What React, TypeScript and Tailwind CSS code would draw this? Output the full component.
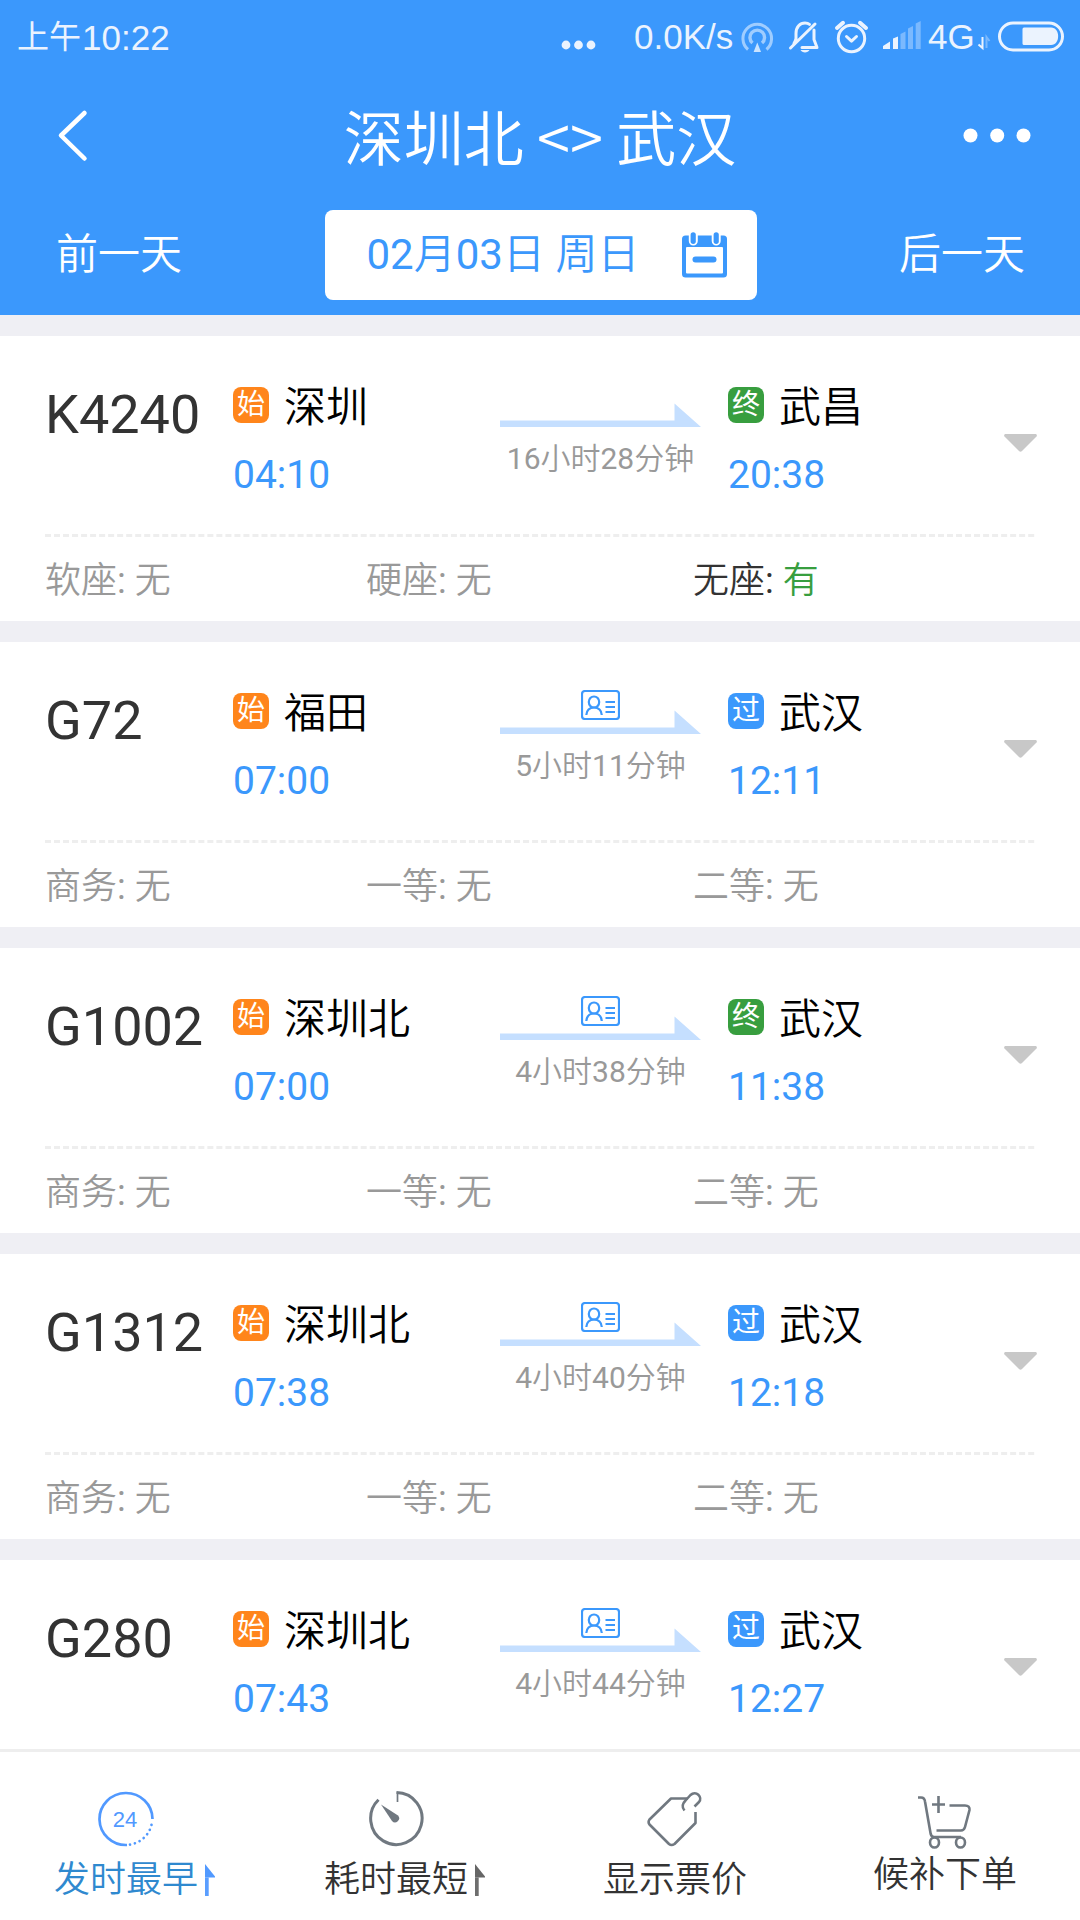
import React from "react";

type StopKind = "始" | "终" | "过";
type Seat = { label: string; value: string; available?: boolean };
type Train = {
  no: string;
  from: string;
  depart: string;
  to: string;
  toKind: StopKind;
  arrive: string;
  duration: string;
  idCard: boolean;
  seats: Seat[];
};

const none = (...labels: string[]): Seat[] => labels.map((label) => ({ label, value: "无" }));

const trains: Train[] = [
  { no: "K4240", from: "深圳", depart: "04:10", to: "武昌", toKind: "终", arrive: "20:38", duration: "16小时28分钟", idCard: false, seats: [...none("软座", "硬座"), { label: "无座", value: "有", available: true }] },
  { no: "G72", from: "福田", depart: "07:00", to: "武汉", toKind: "过", arrive: "12:11", duration: "5小时11分钟", idCard: true, seats: none("商务", "一等", "二等") },
  { no: "G1002", from: "深圳北", depart: "07:00", to: "武汉", toKind: "终", arrive: "11:38", duration: "4小时38分钟", idCard: true, seats: none("商务", "一等", "二等") },
  { no: "G1312", from: "深圳北", depart: "07:38", to: "武汉", toKind: "过", arrive: "12:18", duration: "4小时40分钟", idCard: true, seats: none("商务", "一等", "二等") },
  { no: "G280", from: "深圳北", depart: "07:43", to: "武汉", toKind: "过", arrive: "12:27", duration: "4小时44分钟", idCard: true, seats: [] },
];

/* Renders Chinese runs in the demi-light weight and leaves Latin digits regular. */
function Mixed({ text }: { text: string }) {
  return (
    <>
      {text.split(/([\u4e00-\u9fff]+)/).map((part, i) =>
        i % 2 ? <span key={i} className="font-[350]">{part}</span> : part,
      )}
    </>
  );
}

function StatusBar() {
  return (
    <div className="flex h-[74px] items-center pl-[17px] font-['Liberation_Sans','Noto_Sans_CJK_SC',sans-serif] text-[#ebf3fe]">
      <span className="flex w-[544px] items-center leading-none">
        <span className="text-[32px] leading-none">上午</span>
        <span className="ml-px text-[35px] leading-none">10:22</span>
      </span>
      <svg className="mt-[16px] h-3 w-[36px]" viewBox="0 0 36 12" fill="currentColor">
        <circle cx="5" cy="6" r="4.4" />
        <circle cx="17.5" cy="6" r="4.4" />
        <circle cx="30" cy="6" r="4.4" />
      </svg>
      <span className="-mt-[2px] ml-[37px] w-[107px] text-[35px] leading-none">0.0K/s</span>
      <svg className="h-[56px] w-[190px]" viewBox="741 9 190 56" fill="none" stroke="currentColor">
        <g stroke="#9fcdff" strokeWidth="3">
          <path d="M748 49.5A14.3 14.3 0 1 1 766.500 49.500" />
          <path d="M752.500 43A7.300 7.300 0 1 1 762 43" strokeWidth="3.400" />
          <path d="M757.300 42.500L761 52H753.600Z" fill="#c9e3ff" stroke="none" />
        </g>
        <g strokeWidth="3" strokeLinecap="round" strokeLinejoin="round">
          <path d="M790.500 48L815 24" />
          <path d="M796 39.500V33.500C796 27 800 23 805 23C807 23 808.500 23.500 809.500 24.300" />
          <path d="M796 39.500L794 43.500" />
          <path d="M814 30V39.500L817 47.500H802" />
          <path d="M800.500 50H809.500C808 53.300 802 53.300 800.500 50Z" fill="currentColor" stroke="none" />
          <circle cx="851.500" cy="38.500" r="13.200" />
          <path d="M846.500 36.500L851.500 41.200L856.500 36.500" />
          <path d="M837 28L843 22.800M866 28L860 22.800" strokeWidth="4" />
        </g>
        <g stroke="none" fill="#7bb9fe">
          <path d="M883 49V46L890 41.500V49Z" fill="#ebf3fe" />
          <path d="M893 49V38.500L898 36.500V49Z" fill="#ebf3fe" />
          <path d="M900.500 49V34L905.500 31.500V49Z" />
          <path d="M908 49V28.500L913 26V49Z" />
          <path d="M915.700 49V23.500L920.700 21V49Z" />
        </g>
      </svg>
      <span className="-mt-[2px] -ml-[3px] w-[47px] text-[35px] leading-none">4G</span>
      <svg className="h-[40px] w-[92px]" viewBox="975 17 92 40" fill="none" stroke="currentColor">
        <path d="M982.500 37V48L978.500 44.500" strokeWidth="2" />
        <path d="M986.500 48V37L989.500 41" strokeWidth="2" stroke="#7bb9fe" />
        <rect x="999.500" y="23" width="63" height="27" rx="13.500" strokeWidth="3" />
        <path d="M1024 27.500H1051C1060.500 27.500 1060.500 45 1051 45H1024Q1022.500 45 1022.500 43.500V29Q1022.500 27.500 1024 27.500Z" fill="currentColor" stroke="none" />
      </svg>
    </div>
  );
}

function CalendarIcon() {
  return (
    <svg className="h-[47px] w-[46px]" viewBox="0 0 46 47">
      <rect x="0" y="3.500" width="45" height="42" rx="3.500" fill="#3b98fc" />
      <rect x="4" y="15" width="37" height="26.500" rx="1" fill="#fff" />
      <path d="M6.800 3V9A4.500 4.500 0 0 0 15.800 9V3ZM29.700 3V9A4.500 4.500 0 0 0 38.700 9V3Z" fill="#fff" />
      <rect x="8.600" y="0.300" width="5.200" height="11.600" rx="2.600" fill="#3b98fc" />
      <rect x="31.600" y="0.300" width="5.200" height="11.600" rx="2.600" fill="#3b98fc" />
      <rect x="10.500" y="24.500" width="24" height="6" rx="3" fill="#3b98fc" />
    </svg>
  );
}

function Header() {
  return (
    <header className="h-[315px] bg-[#3b98fc] text-white">
      <StatusBar />
      <div className="flex h-[124px] items-center justify-between pl-[56px] pr-[49px]">
        <svg className="h-[54px] w-[66px]" viewBox="0 0 66 54" fill="none" stroke="currentColor" strokeWidth="4.500" strokeLinecap="round" strokeLinejoin="round">
          <path d="M28.500 4L5 26.500L28.500 49.500" />
        </svg>
        <h1 className="-mt-[3px] -ml-[5px] font-['Noto_Sans_CJK_SC',sans-serif] text-[60px] leading-none font-[350]">深圳北 &lt;&gt; 武汉</h1>
        <svg className="h-4 w-[68px]" viewBox="0 0 68 16" fill="currentColor">
          <circle cx="7.500" cy="7.500" r="7" />
          <circle cx="34.200" cy="7.500" r="7" />
          <circle cx="60.500" cy="7.500" r="7" />
        </svg>
      </div>
      <div className="mt-[12px] flex h-[90px] items-center justify-between pl-[56px] pr-[55px] text-[42px] leading-none">
        <span className="font-[350]">前一天</span>
        <div className="flex h-[90px] w-[432px] items-center rounded-lg bg-white pl-[42px] text-[#3b98fc]">
          <span className="w-[315px] whitespace-pre leading-none"><Mixed text="02月03日 周日" /></span>
          <CalendarIcon />
        </div>
        <span className="font-[350]">后一天</span>
      </div>
    </header>
  );
}

function StopBadge({ kind }: { kind: StopKind }) {
  const color = kind === "始" ? "bg-[#ff851b]" : kind === "终" ? "bg-[#389e3f]" : "bg-[#3b98fc]";
  return (
    <span className={`${color} flex size-9 items-center justify-center rounded-lg text-[28px] leading-none text-white`}>
      {kind}
    </span>
  );
}

function Stop({ kind, name, time }: { kind: StopKind; name: string; time: string }) {
  return (
    <div className="flex flex-col pt-[48px]">
      <div className="flex h-[42px] items-center gap-[15px]">
        <StopBadge kind={kind} />
        <span className="pt-[6px] text-[42px] leading-none font-[350] text-black">{name}</span>
      </div>
      <span className="mt-[30px] text-[39px] leading-none text-[#3b98fc]">{time}</span>
    </div>
  );
}

function IdCardIcon() {
  return (
    <svg className="h-[30px] w-[39px]" viewBox="0 0 39 30" fill="none" stroke="#3b98fc" strokeWidth="2.200">
      <rect x="1" y="1" width="37" height="28" rx="3" />
      <ellipse cx="13" cy="12" rx="5.200" ry="5.500" />
      <path d="M5.300 25C5.800 19.500 9 17.500 13 17.500S20.300 19.500 20.800 25" />
      <path d="M24.500 12H34M24.500 17H34M24.500 22H34" />
    </svg>
  );
}

function TrainCard({ train }: { train: Train }) {
  return (
    <article className="h-[285px] shrink-0 bg-white">
      <div className="flex h-[198px] pl-[45px]">
        <span className="w-[188px] pt-[52px] text-[54px] leading-none text-[#333]">{train.no}</span>
        <div className="w-[267px]"><Stop kind="始" name={train.from} time={train.depart} /></div>
        <div className="flex w-[201px] flex-col items-center pt-[48px]">
          <div className="h-[19px]">{train.idCard && <IdCardIcon />}</div>
          <svg className={train.idCard ? "mt-px h-6 w-[201px]" : "h-6 w-[201px]"} viewBox="0 0 201 24" fill="#c5dfff">
            <path d="M0 17.500H174.500V0.500L201 24H0Z" />
          </svg>
          <span className="mt-[17px] text-[30px] leading-none text-[#999]"><Mixed text={train.duration} /></span>
        </div>
        <div className="ml-[27px] w-[276px]"><Stop kind={train.toKind} name={train.to} time={train.arrive} /></div>
        <svg className="mt-[98px] h-[18px] w-[33px]" viewBox="0 0 33 18" fill="#c8c8c8">
          <path d="M1 0H32Q33.500 1 32.500 2.500L18 17Q16.500 18.500 15 17L0.500 2.500Q-0.500 1 1 0Z" />
        </svg>
      </div>
      {train.seats.length > 0 && (
        <>
          <svg className="ml-[45px] block h-[3px] w-[990px]" viewBox="0 0 990 3">
            <path d="M0 1.500H990" stroke="#eee" strokeWidth="3" strokeDasharray="6 3.020" />
          </svg>
          <div className="flex h-[84px] items-center pt-[4px] pl-[45px] text-[36px] leading-none">
            {train.seats.map((seat, i) => (
              <span key={seat.label} className={`${i === 0 ? "w-[321px]" : "w-[327px]"} ${seat.available ? "text-[#333]" : "text-[#999]"}`}>
                <Mixed text={`${seat.label}: `} />
                <span className={seat.available ? "font-[350] text-[#389e3f]" : "font-[350]"}>{seat.value}</span>
              </span>
            ))}
          </div>
        </>
      )}
    </article>
  );
}

function SortMark({ color }: { color: string }) {
  return (
    <svg className="ml-[7px] h-8 w-2.5" viewBox="0 0 10 32" fill={color}>
      <path d="M0 0L10 12.500V13.500H0Z" />
      <rect x="0" y="13.500" width="3.700" height="18.500" opacity="0.950" />
    </svg>
  );
}

function TabBar() {
  return (
    <nav className="grid h-[171px] w-full grid-cols-4 border-t-[3px] border-[#eee] bg-white text-[36px] leading-none font-[350] text-[#333]">
      <div className="flex flex-col items-center pt-[39px] pr-px text-[#2f89cf]">
        <svg className="mr-[17px] h-14 w-14" viewBox="0 0 56 56" fill="none" stroke="#5199ff" strokeWidth="2.700">
          <path d="M54.500 28A26.500 26 0 1 0 29 54" />
          <path d="M32 53.600A26.500 26 0 0 0 54 31" strokeDasharray="0.010 5.100" strokeLinecap="round" />
          <text x="27" y="36" fontSize="22" textAnchor="middle" fill="#5199ff" stroke="none" fontFamily="Liberation Sans, sans-serif" fontWeight="400">24</text>
        </svg>
        <div className="mt-[15px] flex items-center"><span>发时最早</span><SortMark color="#5199ff" /></div>
      </div>
      <div className="flex flex-col items-center pt-[39px] pr-px">
        <svg className="mr-[18px] h-14 w-14" viewBox="0 0 56 56" fill="none" stroke="#707880" strokeWidth="3">
          <path d="M28.500 1.500A25.700 26 0 1 1 10.500 8.800" />
          <path d="M29.500 1V11" strokeWidth="1.700" />
          <path d="M13 13.500L30 24.500A4 4 0 1 1 24 30Z" fill="#707880" stroke="none" />
        </svg>
        <div className="mt-[15px] flex items-center"><span>耗时最短</span><SortMark color="#666" /></div>
      </div>
      <div className="flex flex-col items-center pt-[39px]">
        <svg className="h-14 w-14" viewBox="0 0 56 56" fill="none" stroke="#707880" strokeWidth="2.600" strokeLinejoin="round">
          <path d="M41 7.500H24L2.500 28.500Q0.700 31 2.500 33.500L22 53Q24.500 55 27.500 53L48.500 32V21" />
          <path d="M37.500 19.500C34.500 16 35.500 12.500 38.500 9.500L43.500 4C49 -1 56 6 52 11L47.500 15.500" />
        </svg>
        <span className="mt-[15px]">显示票价</span>
      </div>
      <div className="flex flex-col items-center pt-[41px]">
        <svg className="h-14 w-14" viewBox="0 0 56 56" fill="none" stroke="#707880" strokeWidth="2.600" strokeLinejoin="round">
          <path d="M1 4.500H4Q7.500 4.500 8 8.500L13.500 40Q14 44 17 44H44" />
          <path d="M21.500 3V20M15 11.500H28M32.500 12.500H48Q53 12.500 52.500 17L48 34Q47 37.500 44 37.500H19.500" />
          <ellipse cx="17.500" cy="49.500" rx="4.500" ry="5" />
          <ellipse cx="43.500" cy="49.500" rx="4.500" ry="5" />
        </svg>
        <span className="mt-[8px]">候补下单</span>
      </div>
    </nav>
  );
}

export default function App() {
  return (
    <div className="flex h-[1920px] w-[1080px] flex-col overflow-hidden bg-[#efeff4] font-[Roboto,'Noto_Sans_CJK_SC',sans-serif]" lang="zh-CN">
      <Header />
      <main className="flex min-h-0 flex-1 flex-col gap-[21px] overflow-hidden pt-[21px]">
        {trains.map((train) => <TrainCard key={train.no} train={train} />)}
      </main>
      <TabBar />
    </div>
  );
}
